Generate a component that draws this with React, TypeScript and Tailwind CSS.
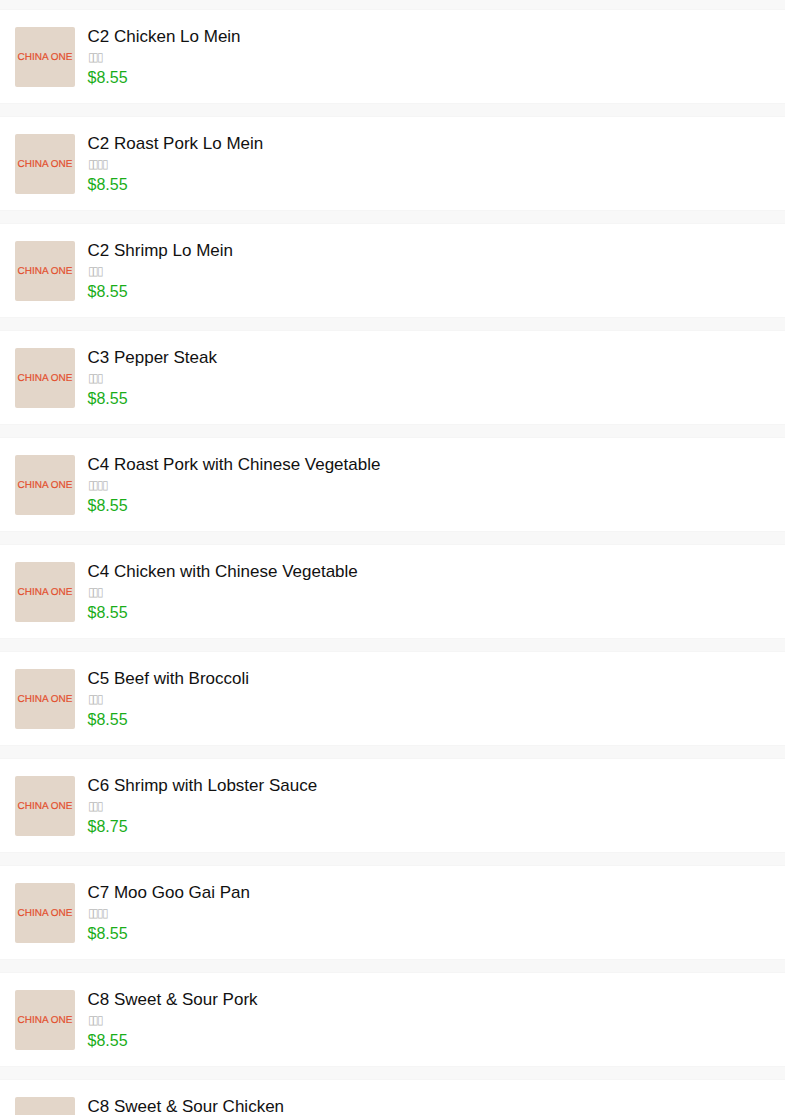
const items: [string, number, string][] = [
  ["C2 Chicken Lo Mein", 3, "$8.55"],
  ["C2 Roast Pork Lo Mein", 4, "$8.55"],
  ["C2 Shrimp Lo Mein", 3, "$8.55"],
  ["C3 Pepper Steak", 3, "$8.55"],
  ["C4 Roast Pork with Chinese Vegetable", 4, "$8.55"],
  ["C4 Chicken with Chinese Vegetable", 3, "$8.55"],
  ["C5 Beef with Broccoli", 3, "$8.55"],
  ["C6 Shrimp with Lobster Sauce", 3, "$8.75"],
  ["C7 Moo Goo Gai Pan", 4, "$8.55"],
  ["C8 Sweet & Sour Pork", 3, "$8.55"],
  ["C8 Sweet & Sour Chicken", 3, "$8.55"],
];

export default function App() {
  return (
    <div className="h-[1115px] overflow-hidden bg-[#f8f8f8] pt-[9px] font-['Liberation_Sans',Arial,sans-serif]">
      {items.map(([name, n, price]) => (
        <div key={name} className="mb-[12px] flex h-[95px] items-start border-y border-[#f5f5f5] bg-white pl-[15px] pt-[17px]">
          <div className="flex h-[60px] w-[60px] shrink-0 items-center justify-center rounded-[2px] bg-[#e3d6c9] pt-[2px]">
            <span className="whitespace-nowrap text-[10px] leading-none text-[#e2502f] [-webkit-text-stroke:0.2px_#e2502f] [text-rendering:geometricPrecision]">CHINA ONE</span>
          </div>
          <div className="ml-[12.5px] flex flex-col">
            <div className="h-[20px] text-[17px] leading-[20px] text-[#111111]">{name}</div>
            <div className="mt-[5px] h-[11px] text-[12px] leading-[10px] tracking-[-2.3px] text-[#bbbbbb]">{"▯".repeat(n)}</div>
            <div className="mt-[5px] h-[20px] text-[16px] leading-[20px] text-[#1aad19]">{price}</div>
          </div>
        </div>
      ))}
    </div>
  );
}
